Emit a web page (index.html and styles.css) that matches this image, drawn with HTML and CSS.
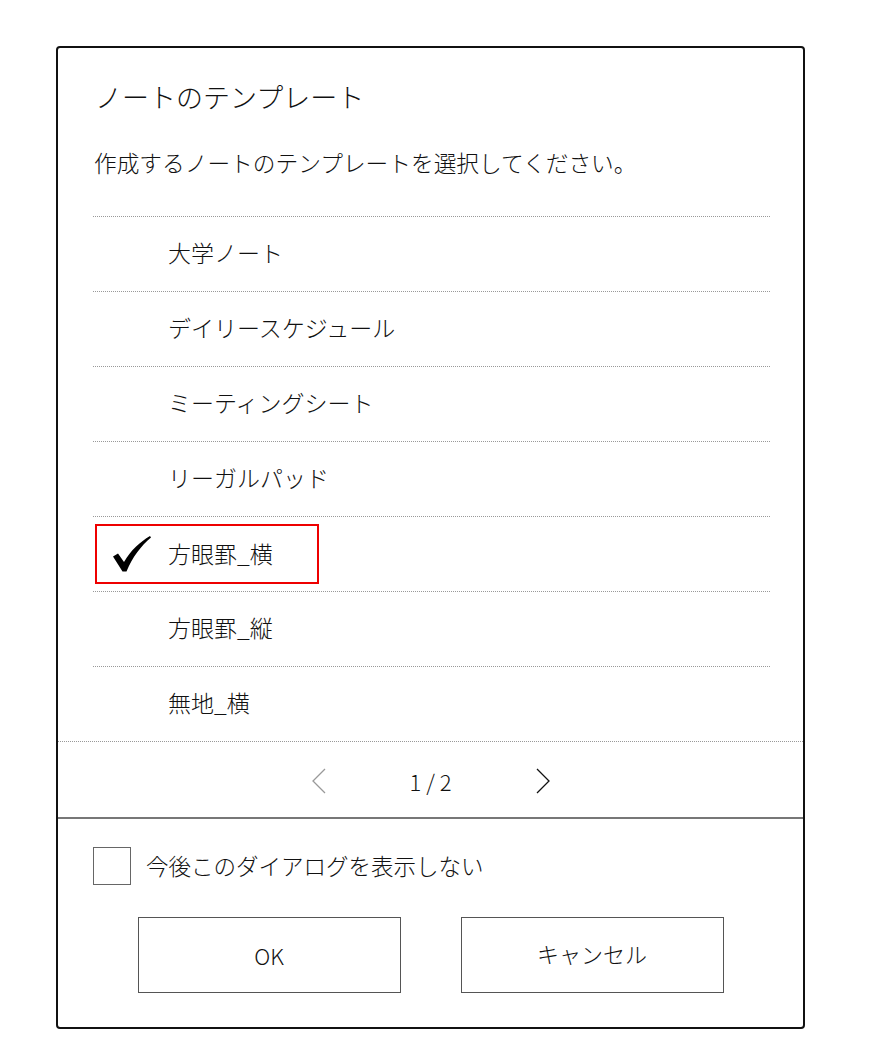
FILE: index.html
```html
<!doctype html>
<html lang="ja">
<head>
	<meta charset="UTF-8">
	<title>ノートのテンプレート</title>
<link rel="stylesheet" href="styles.css">
</head>
<body>
	<div class="dialog">
		<div class="head">
			<h1 class="title">ノートのテンプレート</h1>
			<p class="desc">作成するノートのテンプレートを選択してください。</p>
		</div>
		<ul class="list">
			<li class="row">大学ノート</li>
			<li class="row">デイリースケジュール</li>
			<li class="row">ミーティングシート</li>
			<li class="row">リーガルパッド</li>
			<li class="row row-sel">
				<span class="sel">
					<svg class="check" width="38" height="36" viewBox="0 0 38 36">
						<path d="M0 20.5 L5 17.5 L11 26 C18 14 27 6 37 0 L38 1.5 C28 10 19.5 21 13.5 35.5 L9.5 35.5 Z" fill="#000"/>
					</svg>
					<span>方眼罫_横</span>
				</span>
			</li>
			<li class="row">方眼罫_縦</li>
			<li class="row">無地_横</li>
		</ul>
		<div class="pager">
			<svg class="chev" width="14" height="26" viewBox="0 0 14 26">
				<polyline points="13,1 1,13 13,25" fill="none" stroke="#999" stroke-width="1.3"/>
			</svg>
			<span class="page">1 / 2</span>
			<svg class="chev" width="14" height="26" viewBox="0 0 14 26">
				<polyline points="1,1 13,13 1,25" fill="none" stroke="#111" stroke-width="1.3"/>
			</svg>
		</div>
		<div class="foot">
			<label class="opt">
				<span class="box"></span>
				<span>今後このダイアログを表示しない</span>
			</label>
			<div class="btns">
				<a href="javascript:;" class="btn">OK</a>
				<a href="javascript:;" class="btn btn-jp">キャンセル</a>
			</div>
		</div>
	</div>
</body>
</html>
```

FILE: styles.css
```css
body{
	margin: 0;
	background: #fff;
	color: #111;
	font-family: "Noto Sans CJK JP", "Noto Sans", sans-serif;
	font-weight: 300;
}
.dialog{
	box-sizing: border-box;
	width: 749px;
	height: 983px;
	margin: 46px 0 0 56px;
	border: 2px solid #111;
	border-radius: 4px;
}
.head{
	box-sizing: border-box;
	height: 168px;
	padding: 31px 0 0 36px;
}
.title{
	margin: 0;
	padding-left: 1px;
	font-size: 27px;
	font-weight: 300;
	line-height: 36px;
}
.desc{
	margin: 33px 0 0;
	font-size: 22.7px;
	line-height: 30px;
}
.list{
	margin: 0 33px 0 35px;
	padding: 0;
	list-style: none;
}
.row{
	box-sizing: border-box;
	display: flex;
	align-items: center;
	height: 75px;
	padding: 0 0 4px 75px;
	border-top: 1px dotted #999;
	font-size: 23px;
}
.row-sel{
	padding: 0 0 0 2px;
}
.sel{
	box-sizing: border-box;
	display: flex;
	align-items: center;
	gap: 17px;
	width: 224px;
	height: 60px;
	padding: 0 0 3px 16px;
	border: 2px solid #e00;
}
.check{
	margin-top: 3px;
}
.pager{
	box-sizing: border-box;
	display: flex;
	align-items: center;
	justify-content: center;
	gap: 45px;
	height: 76px;
	padding-top: 2px;
	border-top: 1px dotted #999;
}
.page{
	width: 120px;
	text-align: center;
	font-size: 22px;
}
.foot{
	border-top: 2px solid #777;
	padding-top: 28px;
}
.opt{
	display: flex;
	align-items: center;
	gap: 15px;
	padding-left: 35px;
	font-size: 22.5px;
}
.opt span:last-child{
	margin-top: -3px;
}
.box{
	box-sizing: border-box;
	width: 38px;
	height: 38px;
	border: 1.5px solid #666;
}
.btns{
	display: flex;
	justify-content: center;
	gap: 60px;
	margin-top: 32px;
}
.btn{
	box-sizing: border-box;
	display: flex;
	align-items: center;
	justify-content: center;
	width: 263px;
	height: 76px;
	border: 1px solid #555;
	color: #111;
	text-decoration: none;
	font-size: 22px;
}
.btn-jp{
	padding-bottom: 5px;
}
```
